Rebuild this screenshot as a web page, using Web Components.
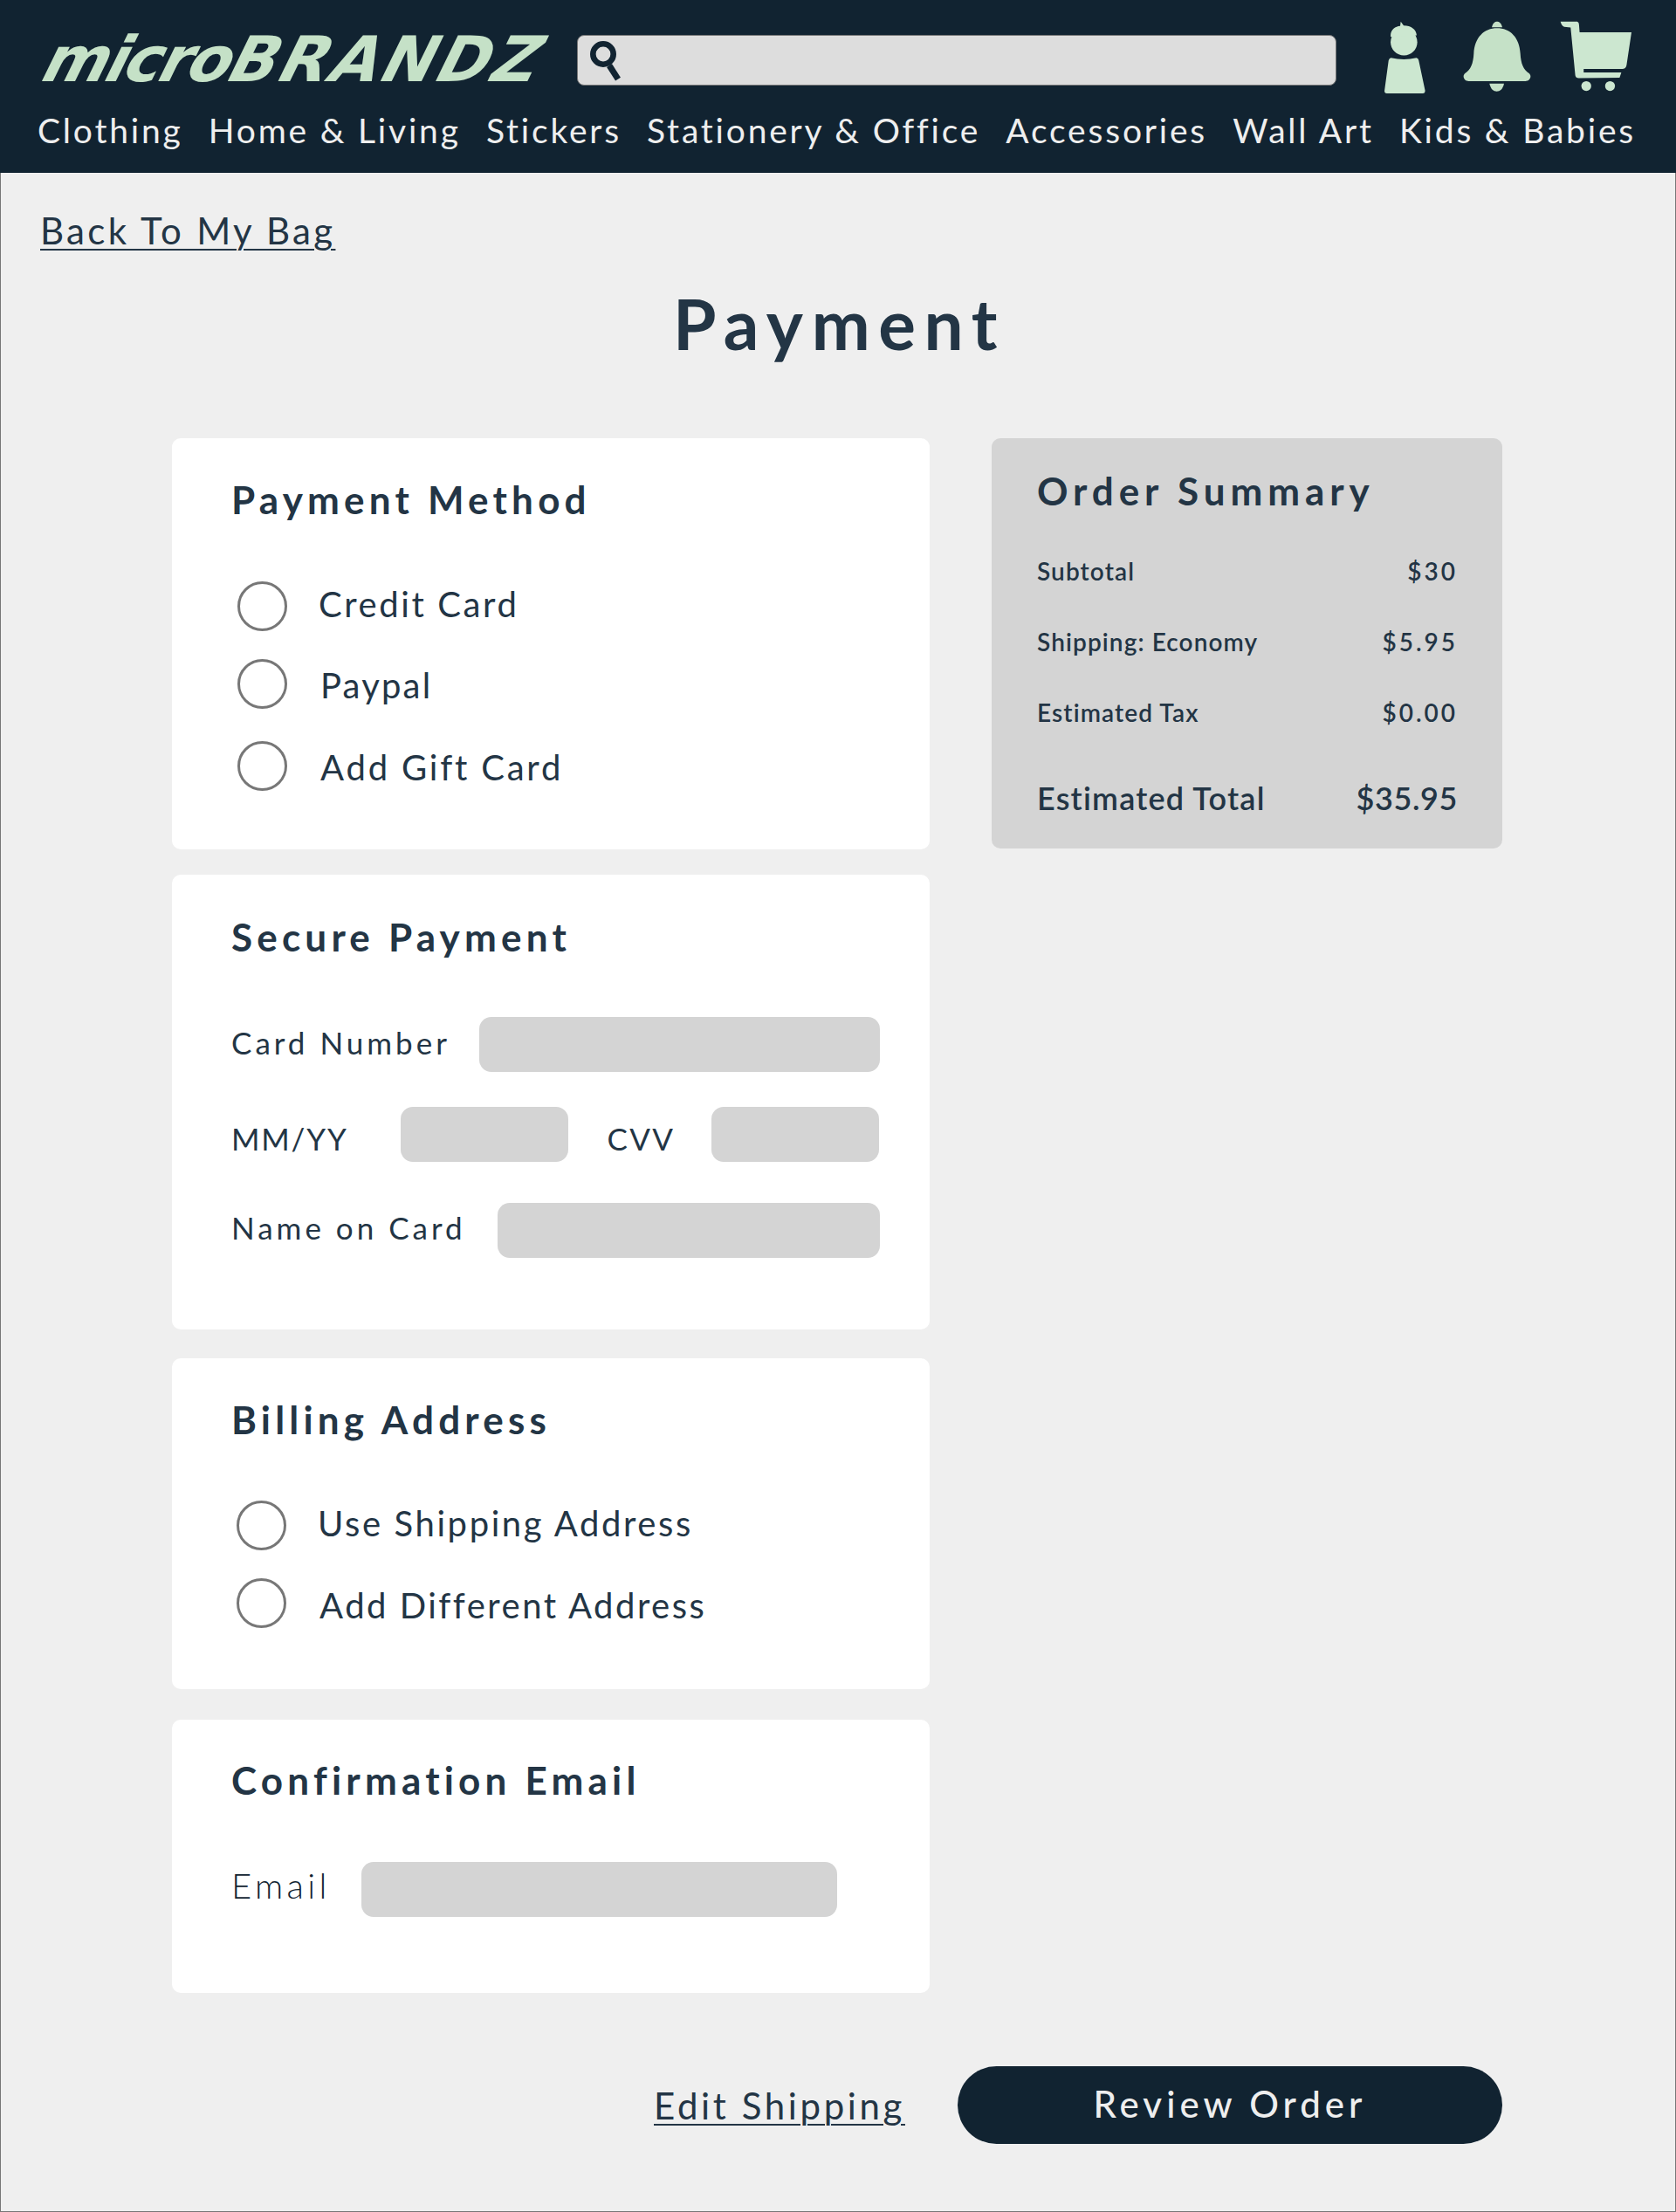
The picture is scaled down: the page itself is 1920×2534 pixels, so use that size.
<!DOCTYPE html>
<html lang="en">
<head>
<meta charset="utf-8">
<title>Payment</title>
<style>
  html, body { margin: 0; padding: 0; background: #efefef; }
  body { font-family: Lato, "Open Sans", sans-serif; color: #233545; }
</style>
</head>
<body>
<checkout-page>
  <site-header slot="header"></site-header>

  <text-link href="#" style="--x:46px;--y:41px;--sp:3.3px">Back To My Bag</text-link>
  <page-title>Payment</page-title>

  <div slot="left">
    <pay-card style="--top:44px;--h:471px;">
      <span slot="title" style="letter-spacing:5.2px">Payment Method</span>
      <radio-option style="--mt:68px;--shift-y:-3px;--label-x:36.5px;--rx:6.5px;--sp:2.6px">Credit Card</radio-option>
      <radio-option style="--mt:32px;--shift-y:1px;--label-x:38.5px;--rx:6.5px;--sp:2.2px">Paypal</radio-option>
      <radio-option style="--mt:37px;--shift-y:1px;--label-x:38.5px;--rx:6.5px;--sp:2.8px">Add Gift Card</radio-option>
    </pay-card>

    <pay-card style="--mt:29px;--top:45px;--h:521px;">
      <span slot="title" style="letter-spacing:5.2px">Secure Payment</span>
      <form-row style="--mt:66px;--h:63px;">
        <field-label style="width:283.5px;--lift:2.6px;--sp:4px">Card Number</field-label>
        <input-box style="width:459px"></input-box>
      </form-row>
      <form-row style="--mt:40px;--h:63px;">
        <field-label style="width:193.5px;--lift:-4.4px;--sp:1.8px">MM/YY</field-label>
        <input-box style="width:192px"></input-box>
        <field-label style="width:119px;margin-left:45px;--lift:-4.4px">CVV</field-label>
        <input-box style="width:192px"></input-box>
      </form-row>
      <form-row style="--mt:47px;--h:63px;">
        <field-label style="width:305px;--lift:4px;--sp:4px">Name on Card</field-label>
        <input-box style="width:438px"></input-box>
      </form-row>
    </pay-card>

    <pay-card style="--mt:33px;--top:44px;--h:379px;">
      <span slot="title" style="letter-spacing:5.2px">Billing Address</span>
      <radio-option style="--mt:67px;--shift-y:-3px;--label-x:36.5px;--rx:5.5px;--sp:2.6px">Use Shipping Address</radio-option>
      <radio-option style="--mt:32px;--shift-y:2px;--label-x:38.5px;--rx:5.5px;--sp:2.5px">Add Different Address</radio-option>
    </pay-card>

    <pay-card style="--mt:35px;--top:43px;--h:313px;">
      <span slot="title" style="letter-spacing:5.2px">Confirmation Email</span>
      <form-row style="--mt:68px;--h:63px;">
        <field-label style="width:149px;--lift:4.5px;--fs:40px;--fw:300;--sp:4.4px;color:#112331">Email</field-label>
        <input-box style="width:545px"></input-box>
      </form-row>
    </pay-card>
  </div>

  <order-summary slot="right">
    <summary-line>Subtotal<span slot="value">$30</span></summary-line>
    <summary-line>Shipping: Economy<span slot="value">$5.95</span></summary-line>
    <summary-line>Estimated Tax<span slot="value">$0.00</span></summary-line>
    <summary-line total>Estimated Total<span slot="value">$35.95</span></summary-line>
  </order-summary>

  <checkout-actions slot="footer"></checkout-actions>
</checkout-page>

<script>
const DARK = '#233545';

function shadow(el, html) {
  const root = el.attachShadow({ mode: 'open' });
  root.innerHTML = html;
}

class CheckoutPage extends HTMLElement {
  constructor() {
    super();
    shadow(this, `
      <style>
        :host { display: block; height: 2534px; box-sizing: border-box; background: #efefef;
                border-left: 1px solid #777; border-right: 1px solid #777; border-bottom: 1px solid #777; }
        .content { display: block; margin-left: -1px; }
        .columns { display: grid; grid-template-columns: 868px 585px; column-gap: 71px; margin: 0 0 0 197px; }
        .top { height: 304px; }
      </style>
      <div class="content">
        <slot name="header"></slot>
        <div class="top"><slot></slot></div>
        <div class="columns">
          <slot name="left"></slot>
          <slot name="right"></slot>
        </div>
        <slot name="footer"></slot>
      </div>`);
  }
}

class SiteHeader extends HTMLElement {
  constructor() {
    super();
    shadow(this, `
      <style>
        :host { display: block; height: 198px; background: #112331; margin: 0 -1px; box-sizing: border-box; padding-top: 24px; }
        .top { display: flex; height: 83px; padding-left: 43px; }
        .logo { width: 569px; height: 70px; flex: none; margin-top: 9px; color: #c5e1c7; font-family: "DejaVu Sans", sans-serif; font-weight: 700; font-size: 72px;
                line-height: 70px; white-space: nowrap; transform-origin: 0 100%; transform: skewX(-26deg) translateX(-5px); }
        .logo .sm { letter-spacing: -3px; }
        .logo .lg { letter-spacing: 3px; }
        .search { flex: none; width: 869.5px; height: 58px; box-sizing: border-box; margin: 16px 0 0 50px; background: #ddd;
                  border: 1px solid #777; border-radius: 8px; display: flex; align-items: flex-start; padding: 4px 0 0 12px; }
        .icons { display: flex; }
        svg { display: block; flex: none; }
        .user { margin-left: 55px; }
        .bell { margin-left: 43px; }
        .cart { margin-left: 33px; }
        nav { display: flex; justify-content: space-between; width: 1831px; margin: 0 0 0 44px; padding-top: 19px; color: #eee;
              font-size: 39px; line-height: 46px; letter-spacing: 2.8px; white-space: nowrap; }
      </style>
      <div class="top">
        <div class="logo"><span class="sm">micro</span><span class="lg">BRANDZ</span></div>
        <div class="search">
          <svg width="40" height="48" viewBox="0 0 40 48" fill="none" stroke="#112331">
            <circle cx="17" cy="17" r="11.7" stroke-width="6.6"/>
            <path d="M24 30 L34 45.7" stroke-width="7"/>
          </svg>
        </div>
        <div class="icons">
          <svg class="user" width="47" height="83" viewBox="258 70 141 250" fill="#cce7d0">
            <circle cx="325" cy="143" r="46"/>
            <path d="M279 118 C280 100 295 88 312 87 L314 72 L324 86 C350 86 368 100 369 120 L279 125Z"/>
            <path d="M280 197 Q325 208 368 197 Q375 198 376 206 L398 310 Q398 320 390 320 L266 320 Q257 320 258 310 L272 206 Q274 198 280 197Z"/>
          </svg>
          <svg class="bell" width="78" height="81" viewBox="528 78 234 243" fill="#c5e1c7">
            <path d="M645 103 C600 103 568 135 565 190 C563 225 555 245 535 258 C525 266 530 285 548 285 L742 285 C760 285 765 266 755 258 C735 245 727 225 725 190 C722 135 690 103 645 103Z"/>
            <path d="M627 100 C630 85 638 80 645 80 C652 80 660 85 663 100Z"/>
            <path d="M619 293 L669 293 C665 312 655 320 644 320 C633 320 623 312 619 293Z"/>
          </svg>
          <svg class="cart" width="82" height="81" viewBox="860 78 247 243" fill="#cce7d0">
            <path d="M862 80 L920 80 Q926 82 926 90 L928 117 L1107 117 L1090 230 Q1087 243 1075 243 L942 243 L942 255 L1072 255 L1066 273 L925 275 Q915 275 913 265 L897 100 L875 98 Q866 95 862 80Z"/>
            <circle cx="951" cy="302" r="17"/>
            <circle cx="1033" cy="302" r="17"/>
          </svg>
        </div>
      </div>
      <nav>
        <span>Clothing</span><span>Home &amp; Living</span><span>Stickers</span><span>Stationery &amp; Office</span><span>Accessories</span><span>Wall Art</span><span>Kids &amp; Babies</span>
      </nav>`);
  }
}

class TextLink extends HTMLElement {
  constructor() {
    super();
    shadow(this, `
      <style>
        :host { display: inline-block; margin: var(--y, 0) 0 0 var(--x, 0); font-size: 42px; line-height: 50px; letter-spacing: var(--sp, 1.6px); color: ${DARK}; }
        a { color: inherit; text-decoration: underline; text-decoration-thickness: 2px; text-underline-offset: 5px; }
      </style>
      <a part="link" href="${this.getAttribute('href') || '#'}"><slot></slot></a>`);
  }
}

class PageTitle extends HTMLElement {
  constructor() {
    super();
    shadow(this, `
      <style>
        :host { display: block; text-align: center; margin-top: 33px; padding-left: 4px; font-size: 80px; line-height: 96px; font-weight: 700; letter-spacing: 9.6px; color: ${DARK}; }
      </style>
      <slot></slot>`);
  }
}

class PayCard extends HTMLElement {
  constructor() {
    super();
    shadow(this, `
      <style>
        :host { display: block; box-sizing: border-box; height: var(--h); margin-top: var(--mt, 0); padding: var(--top) 34px 0 68px; background: #fff; border-radius: 10px; }
        .title { font-size: 44px; line-height: 52px; font-weight: 700; color: ${DARK}; white-space: nowrap; }
      </style>
      <div class="title"><slot name="title"></slot></div>
      <slot></slot>`);
  }
}

class RadioOption extends HTMLElement {
  constructor() {
    super();
    shadow(this, `
      <style>
        :host { display: flex; align-items: center; height: 57px; margin-top: var(--mt, 0); padding-left: var(--rx, 5px); font-size: 40px; letter-spacing: var(--sp, 1.4px); color: ${DARK}; white-space: nowrap; }
        i { display: block; flex: none; width: 57px; height: 57px; box-sizing: border-box; border: 3px solid #777; border-radius: 50%; }
        span { margin-left: var(--label-x, 38px); position: relative; top: var(--shift-y, 2px); }
      </style>
      <i></i><span><slot></slot></span>`);
  }
}

class FormRow extends HTMLElement {
  constructor() {
    super();
    shadow(this, `
      <style>
        :host { display: flex; align-items: center; height: var(--h); margin-top: var(--mt, 0); }
      </style>
      <slot></slot>`);
  }
}

class FieldLabel extends HTMLElement {
  constructor() {
    super();
    shadow(this, `
      <style>
        :host { display: block; flex: none; font-size: var(--fs, 35px); font-weight: var(--fw, 400); letter-spacing: var(--sp, 2.4px); color: ${DARK}; white-space: nowrap; position: relative; top: calc(var(--lift, 0px) * -1); }
      </style>
      <slot></slot>`);
  }
}

class InputBox extends HTMLElement {
  constructor() {
    super();
    shadow(this, `
      <style>
        :host { display: block; flex: none; height: 63px; background: #d4d4d4; border-radius: 14px; }
      </style>`);
  }
}

class OrderSummary extends HTMLElement {
  constructor() {
    super();
    shadow(this, `
      <style>
        :host { display: block; box-sizing: border-box; height: 470px; padding: 34px 51px 0 52px; background: #d4d4d4; border-radius: 10px; color: ${DARK}; }
        h2 { margin: 0 0 49px; font-size: 44px; line-height: 52px; font-weight: 700; letter-spacing: 5.9px; white-space: nowrap; }
      </style>
      <h2>Order Summary</h2>
      <slot></slot>`);
  }
}

class SummaryLine extends HTMLElement {
  constructor() {
    super();
    const total = this.hasAttribute('total');
    shadow(this, `
      <style>
        :host { display: flex; justify-content: space-between; align-items: baseline; height: 81px; font-size: 28px; line-height: 34px; font-weight: 600; }
        :host([total]) { font-size: 36px; line-height: 44px; margin-top: 11.6px; height: auto; }
        .v { letter-spacing: ${total ? '0.6px' : '3px'}; }
        .k { letter-spacing: ${total ? '1.2px' : '1.1px'}; }
      </style>
      <span class="k"><slot></slot></span><span class="v"><slot name="value"></slot></span>`);
  }
}

class CheckoutActions extends HTMLElement {
  constructor() {
    super();
    shadow(this, `
      <style>
        :host { display: flex; align-items: center; margin-top: 84px; padding-left: 749px; color: ${DARK}; }
        a { display: block; flex: none; width: 348px; font-size: 42px; line-height: 50px; letter-spacing: 3.6px; color: inherit; text-decoration: underline; text-decoration-thickness: 2px; text-underline-offset: 5px; white-space: nowrap; }
        button { flex: none; width: 624px; height: 89px; padding: 0 0 3px; border: 0; border-radius: 45px; background: #112331; color: #eee; font: 500 42px Lato, sans-serif; letter-spacing: 5px; }
      </style>
      <a href="#">Edit Shipping</a>
      <button type="button">Review Order</button>`);
  }
}

customElements.define('checkout-page', CheckoutPage);
customElements.define('site-header', SiteHeader);
customElements.define('text-link', TextLink);
customElements.define('page-title', PageTitle);
customElements.define('pay-card', PayCard);
customElements.define('radio-option', RadioOption);
customElements.define('form-row', FormRow);
customElements.define('field-label', FieldLabel);
customElements.define('input-box', InputBox);
customElements.define('order-summary', OrderSummary);
customElements.define('summary-line', SummaryLine);
customElements.define('checkout-actions', CheckoutActions);
</script>
</body>
</html>
